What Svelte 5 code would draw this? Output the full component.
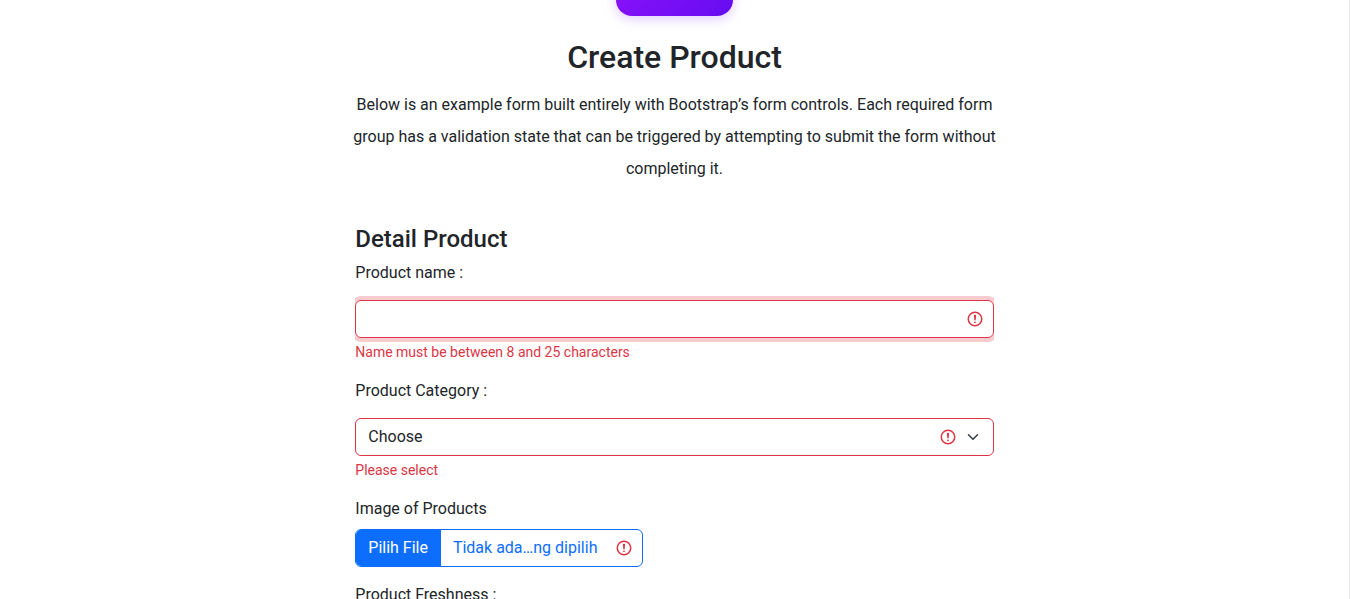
<script>
  let name = $state('');
</script>

{#snippet alertIcon()}
  <svg class="alert" viewBox="0 0 12 12" width="18" height="18" fill="none" stroke="#dc3545" aria-hidden="true">
    <circle cx="6" cy="6" r="4.5" />
    <path stroke-linejoin="round" d="M5.8 3.6h.4L6 6.5z" />
    <circle cx="6" cy="8.2" r=".6" fill="#dc3545" stroke="none" />
  </svg>
{/snippet}

<div class="page">
  <header>
    <div class="logo"></div>
    <h2>Create Product</h2>
    <p>
      Below is an example form built entirely with Bootstrap’s form controls. Each required form group has a validation
      state that can be triggered by attempting to submit the form without completing it.
    </p>
  </header>
  <form novalidate>
    <h4>Detail Product</h4>
    <label class="caption" for="name">Product name :</label>
    <div class="control focused">
      <input id="name" type="text" bind:value={name} />
      {@render alertIcon()}
    </div>
    <div class="feedback">Name must be between 8 and 25 characters</div>

    <div class="caption next">Product Category :</div>
    <div class="control select" role="button" tabindex="0">
      <span class="value">Choose</span>
      {@render alertIcon()}
      <svg class="chevron" viewBox="0 0 16 16" width="16" height="12" fill="none" aria-hidden="true">
        <path stroke="#343a40" stroke-linecap="round" stroke-linejoin="round" stroke-width="2" d="m2 5 6 6 6-6" />
      </svg>
    </div>
    <div class="feedback">Please select</div>

    <div class="caption next">Image of Products</div>
    <div class="file">
      <span class="choose">Pilih File</span>
      <span class="filename">Tidak ada…ng dipilih</span>
      {@render alertIcon()}
    </div>
    <div class="caption next">Product Freshness :</div>
  </form>
</div>

<style>
  :global(body) {
    margin: 0;
    background: #fff;
  }
  .page {
    box-sizing: border-box;
    height: 599px;
    overflow: hidden;
    border-right: 1px solid #ececec;
    font: 400 16px/24px Roboto, sans-serif;
    color: #212529;
    display: flex;
    flex-direction: column;
    align-items: center;
  }
  header {
    width: 662.6px;
    flex: none;
    text-align: center;
  }
  .logo {
    width: 117px;
    height: 100px;
    margin: -84px auto 0;
    border-radius: 16px;
    background: linear-gradient(135deg, #9a14ff, #650cf0);
    box-shadow: 0 3px 12px rgba(112, 16, 245, 0.22);
  }
  h2 {
    margin: 22px 0 0;
    font-size: 32px;
    line-height: 38px;
    font-weight: 500;
  }
  p {
    margin: 13px 0 0;
    line-height: 32px;
  }
  form {
    width: 638.4px;
    flex: none;
    margin-top: 40px;
  }
  h4 {
    margin: 0;
    font-size: 24px;
    line-height: 29px;
    font-weight: 500;
  }
  .caption {
    display: block;
    margin-top: 7px;
  }
  .caption.next {
    margin-top: 16px;
  }
  .control {
    box-sizing: border-box;
    height: 38px;
    margin-top: 15px;
    border: 1px solid #dc3545;
    border-radius: 6px;
    display: flex;
    align-items: center;
    padding: 0 9px 0 12px;
  }
  .focused {
    box-shadow: 0 0 0 4px rgba(220, 53, 69, 0.25);
    clip-path: inset(-4px -0.3px);
  }
  input {
    flex: 1;
    min-width: 0;
    border: 0;
    outline: 0;
    padding: 0;
    background: none;
    font: inherit;
    color: inherit;
  }
  .select {
    padding-right: 12px;
  }
  .value {
    flex: 1;
  }
  .alert {
    flex: none;
  }
  .chevron {
    flex: none;
    margin-left: 8px;
  }
  .feedback {
    margin-top: 4px;
    font-size: 14px;
    line-height: 21px;
    color: #dc3545;
  }
  .file {
    box-sizing: border-box;
    width: 288px;
    height: 38px;
    margin-top: 8px;
    border: 1px solid #0d6efd;
    border-radius: 6px;
    overflow: hidden;
    display: flex;
    align-items: center;
    padding-right: 9px;
    color: #0d6efd;
  }
  .choose {
    box-sizing: border-box;
    width: 84.6px;
    flex: none;
    padding-left: 12px;
    background: #0d6efd;
    color: #fff;
    line-height: 36px;
  }
  .filename {
    flex: 1;
    padding-left: 12px;
    white-space: nowrap;
  }
</style>
